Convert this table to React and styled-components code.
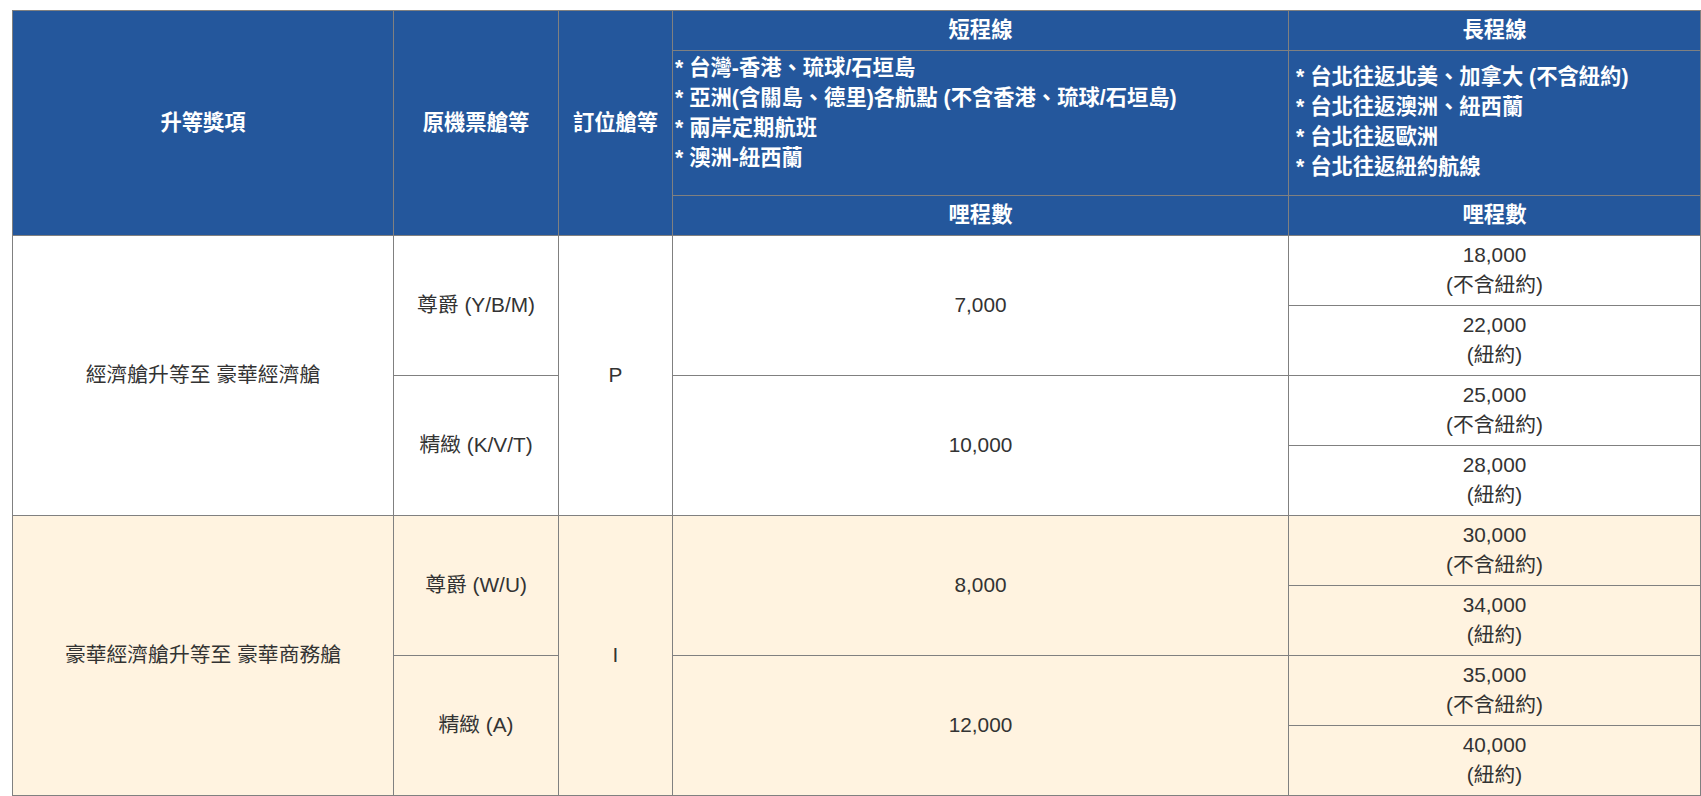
import React from "react";
import styled, { createGlobalStyle } from "styled-components";

const GlobalStyle = createGlobalStyle`
  body {
    margin: 0;
    background: #fff;
    font-family: "Liberation Sans", "Noto Sans CJK TC", sans-serif;
  }
`;

const Page = styled.div`
  padding: 10px 0 0 12px;
`;

const Table = styled.table`
  border-collapse: collapse;
  table-layout: fixed;
  width: 1688px;
  font-size: 20.8px;
  line-height: 30px;
  color: #333;
`;

const Head = styled.th`
  background: #24579c;
  color: #fff;
  font-weight: bold;
  font-size: 21.3px;
  border: 1px solid #808080;
  padding: 4px 5px 5px;
  text-align: ${(p) => (p.$left ? "left" : "center")};
  vertical-align: middle;
  padding-left: ${(p) => (p.$indent != null ? p.$indent : 5)}px;
`;

const Routes = styled.div`
  margin-top: -2px;
  padding-bottom: ${(p) => (p.$extra ? 17 : 0)}px;
`;

const Row = styled.tr`
  background: ${(p) => (p.$tint ? "#fff3e0" : "#fff")};
`;

const Cell = styled.td`
  border: 1px solid #808080;
  padding: 4px 5px 5px;
  height: 60px;
  text-align: center;
  vertical-align: middle;
`;

//table data, one group per upgrade type
const groups = [
  {
    title: "經濟艙升等至 豪華經濟艙",
    booking: "P",
    fares: [
      { name: "尊爵 (Y/B/M)", short: "7,000", long: ["18,000", "22,000"] },
      { name: "精緻 (K/V/T)", short: "10,000", long: ["25,000", "28,000"] },
    ],
  },
  {
    title: "豪華經濟艙升等至 豪華商務艙",
    booking: "I",
    fares: [
      { name: "尊爵 (W/U)", short: "8,000", long: ["30,000", "34,000"] },
      { name: "精緻 (A)", short: "12,000", long: ["35,000", "40,000"] },
    ],
  },
];

const shortRoutes = [
  "台灣-香港、琉球/石垣島",
  "亞洲(含關島、德里)各航點 (不含香港、琉球/石垣島)",
  "兩岸定期航班",
  "澳洲-紐西蘭",
];

const longRoutes = [
  "台北往返北美、加拿大 (不含紐約)",
  "台北往返澳洲、紐西蘭",
  "台北往返歐洲",
  "台北往返紐約航線",
];

const notes = ["(不含紐約)", "(紐約)"];

const App = () => {
  return (
    <Page>
      <GlobalStyle />
      <Table>
        <colgroup>
          <col style={{ width: 381 }} />
          <col style={{ width: 165 }} />
          <col style={{ width: 114 }} />
          <col style={{ width: 616 }} />
          <col style={{ width: 412 }} />
        </colgroup>
        <thead>
          <tr>
            <Head rowSpan={3}>升等獎項</Head>
            <Head rowSpan={3}>原機票艙等</Head>
            <Head rowSpan={3}>訂位艙等</Head>
            <Head>短程線</Head>
            <Head>長程線</Head>
          </tr>
          <tr>
            <Head $left $indent={2}>
              <Routes $extra>
                {shortRoutes.map((r) => (
                  <div key={r}>* {r}</div>
                ))}
              </Routes>
            </Head>
            <Head $left $indent={7}>
              <Routes>
                {longRoutes.map((r) => (
                  <div key={r}>* {r}</div>
                ))}
              </Routes>
            </Head>
          </tr>
          <tr>
            <Head>哩程數</Head>
            <Head>哩程數</Head>
          </tr>
        </thead>
        <tbody>
          {groups.map((group, gi) =>
            group.fares.map((fare, fi) =>
              fare.long.map((miles, li) => (
                <Row key={`${gi}-${fi}-${li}`} $tint={gi === 1}>
                  {fi === 0 && li === 0 && <Cell rowSpan={4}>{group.title}</Cell>}
                  {li === 0 && <Cell rowSpan={2}>{fare.name}</Cell>}
                  {fi === 0 && li === 0 && <Cell rowSpan={4}>{group.booking}</Cell>}
                  {li === 0 && <Cell rowSpan={2}>{fare.short}</Cell>}
                  <Cell>
                    {miles}
                    <br />
                    {notes[li]}
                  </Cell>
                </Row>
              ))
            )
          )}
        </tbody>
      </Table>
    </Page>
  );
};

export default App;
